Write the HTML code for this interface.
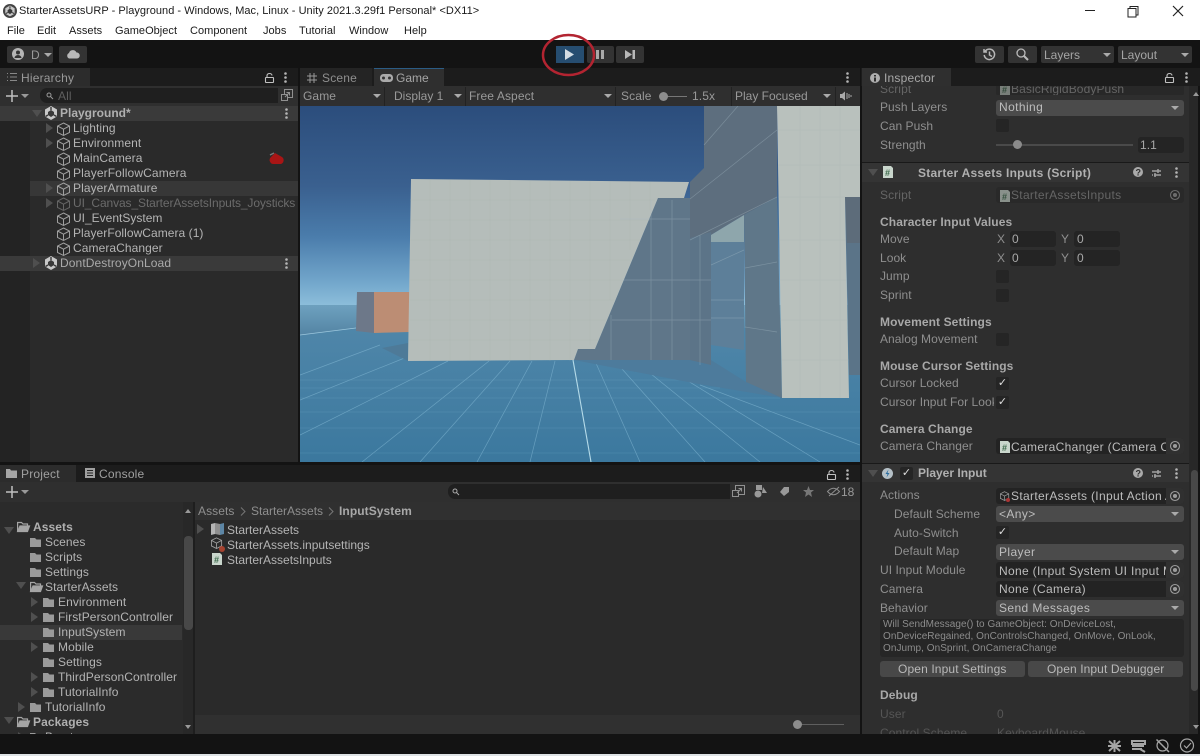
<!DOCTYPE html>
<html><head><meta charset="utf-8">
<style>
html,body{margin:0;padding:0;background:#fff}
body{width:1200px;height:756px;overflow:hidden;position:relative;font-family:"Liberation Sans",sans-serif}
.b{position:absolute}
.t{position:absolute;white-space:nowrap;font-size:12px;line-height:16px;letter-spacing:.08px;color:#b4b4b4}
.w{color:#1a1a1a;font-size:11px;letter-spacing:.03px}
.l{color:#8f8f8f;letter-spacing:.05px}
.h{color:#a8a8a8;font-weight:bold;letter-spacing:.1px}
.d{color:#656565;letter-spacing:.1px}
.v{color:#bdbdbd;letter-spacing:.4px}
.o{color:#bdbdbd;letter-spacing:.33px}
.tab{letter-spacing:.2px}
.tb{letter-spacing:.1px;color:#999}
.dd{position:absolute;left:996px;width:188px;height:16px;background:#4b4b4b;border-radius:3px}
.of{position:absolute;left:996px;width:188px;height:16px;background:#232323;border-radius:3px}
.cb{position:absolute;left:996px;width:13px;height:13px;background:#252525;border-radius:2px;color:#ddd;font-size:11px;line-height:13px;text-align:center}
.nf{position:absolute;height:16px;background:#242424;border-radius:3px}
.btn{position:absolute;background:#333;border-radius:2px}
.tri{position:absolute;width:0;height:0;border-left:4px solid transparent;border-right:4px solid transparent;border-top:4px solid #aaa}
.rt{position:absolute;width:0;height:0;border-top:5px solid transparent;border-bottom:5px solid transparent;border-left:7px solid #4f4f4f}
.dt{position:absolute;width:0;height:0;border-left:5px solid transparent;border-right:5px solid transparent;border-top:7px solid #4f4f4f}
svg{position:absolute;overflow:visible}
</style></head><body>
<svg width="0" height="0" style="position:absolute"><defs>
<g id="cube" fill="none" stroke="#a0a0a0" stroke-width="1"><path d="M6.500 1 12.500 4V10.500L6.500 13.500 .5 10.500V4Z"/><path d="M.5 4 6.500 7.200 12.500 4M6.500 7.200V13.500"/></g>
<g id="folder" fill="#9a9a9a"><path d="M0 2H5L6.500 3.500H11V11H0Z"/></g>
<g id="open" fill="none" stroke="#a5a5a5" stroke-width="1.2"><path d="M.6 10.500V1.500H4.500L6 3H10.500V5"/><path d="M.6 10.500 3 5H12.500L10.500 10.500Z" fill="#a5a5a5"/></g>
<g id="scene"><path d="M7 0 13 3.500V10.500L7 14 1 10.500V3.500Z" fill="#c9c9c9"/><path d="M7 4 10 6V9L7 11 4 9V6Z" fill="#3a3a3a"/><path d="M7 4V1M4 9 1.500 10.500M10 9 12.500 10.500" stroke="#3a3a3a" stroke-width="1.400"/></g>
<g id="target" fill="none" stroke="#9b9b9b" stroke-width="1.1"><circle cx="5" cy="5" r="4.500"/><circle cx="5" cy="5" r="1.500" fill="#9b9b9b"/></g>
<g id="kebab" fill="#b5b5b5"><circle cx="1.500" cy="1.500" r="1.300"/><circle cx="1.500" cy="5.500" r="1.300"/><circle cx="1.500" cy="9.500" r="1.300"/></g>
<g id="lock" fill="none" stroke="#c0c0c0" stroke-width="1.1"><rect x=".5" y="4.500" width="8" height="5" rx=".5"/><path d="M2 4.500V2.500A2.500 2 0 0 1 7 2.500"/></g>
<g id="sliders" stroke="#a0a0a0" stroke-width="1.500"><path d="M0 3H9M2 7H9M0 7H1M6 1V5M3 5V9"/></g>
<g id="script"><path d="M0 0H8L10 2V12H0Z" fill="#c9d6cc"/><text x="2" y="10" font-size="9" font-weight="bold" fill="#3c6a4b" font-family="Liberation Sans">#</text></g>
</defs></svg>

<div class="b" style="left:0;top:0;width:1200px;height:40px;background:#fff"></div>
<div class="b" style="left:0;top:40px;width:1200px;height:714px;background:#131313"></div>
<svg style="left:3px;top:4px" width="14" height="14"><circle cx="7" cy="7" r="7" fill="#444"/><use href="#scene" transform="translate(1.500 1.500) scale(.78)"/></svg>
<span class="t w" style="left:19px;top:3px">StarterAssetsURP - Playground - Windows, Mac, Linux - Unity 2021.3.29f1 Personal* &lt;DX11&gt;</span>
<span class="t w" style="left:7px;top:23px">File</span>
<span class="t w" style="left:37px;top:23px">Edit</span>
<span class="t w" style="left:69px;top:23px">Assets</span>
<span class="t w" style="left:115px;top:23px">GameObject</span>
<span class="t w" style="left:190px;top:23px">Component</span>
<span class="t w" style="left:263px;top:23px">Jobs</span>
<span class="t w" style="left:299px;top:23px">Tutorial</span>
<span class="t w" style="left:349px;top:23px">Window</span>
<span class="t w" style="left:404px;top:23px">Help</span>
<svg style="left:1085px;top:5px" width="110" height="16" fill="none" stroke="#222" stroke-width="1"><path d="M0 5.500H10"/><path d="M43 3.500H51V12H43ZM45 3.500V1.500H53V10H51"/><path d="M88 1 98 11M98 1 88 11" stroke-width="1.200"/></svg>

<div class="btn" style="left:7px;top:46px;width:46px;height:17px"></div>
<svg style="left:12px;top:48px" width="12" height="12"><circle cx="6" cy="6" r="6" fill="#b5b5b5"/><circle cx="6" cy="4.500" r="2" fill="#333"/><path d="M2.500 10A3.500 3 0 0 1 9.500 10Z" fill="#333"/></svg>
<span class="t" style="left:31px;top:47px;color:#999">D</span>
<div class="tri" style="left:44px;top:53px"></div>
<div class="btn" style="left:59px;top:46px;width:28px;height:17px"></div>
<svg style="left:66px;top:49px" width="14" height="10"><path d="M3 9.500A3 3 0 0 1 3 4 4 4 0 0 1 10.500 3.500 3 3 0 0 1 11 9.500Z" fill="#b8b8b8"/></svg>
<div class="b" style="left:556px;top:46px;width:28px;height:17px;background:#264d70"></div>
<svg style="left:565px;top:49px" width="10" height="11"><path d="M0 0 9 5.500 0 11Z" fill="#d4dde4"/></svg>
<div class="btn" style="left:587px;top:46px;width:27px;height:17px"></div>
<div class="b" style="left:596px;top:50px;width:3px;height:9px;background:#a9a9a9"></div>
<div class="b" style="left:601px;top:50px;width:3px;height:9px;background:#a9a9a9"></div>
<div class="btn" style="left:616px;top:46px;width:28px;height:17px"></div>
<svg style="left:625px;top:50px" width="11" height="10"><path d="M0 0 7 4.500 0 9ZM7.500 0H10V9H7.500Z" fill="#b8b8b8"/></svg>

<div class="btn" style="left:975px;top:46px;width:29px;height:17px"></div>
<svg style="left:983px;top:48px" width="13" height="13" fill="none" stroke="#b8b8b8" stroke-width="1.500"><path d="M2 3.500A5.200 5.200 0 1 1 1.200 7M1 1V4H4M6.500 3.500V7L9 8.500"/></svg>
<div class="btn" style="left:1008px;top:46px;width:29px;height:17px"></div>
<svg style="left:1016px;top:48px" width="13" height="13" fill="none" stroke="#b8b8b8" stroke-width="1.300"><circle cx="5" cy="5" r="4"/><path d="M8 8 12 12" stroke-width="2"/></svg>
<div class="btn" style="left:1041px;top:46px;width:73px;height:17px"></div>
<span class="t" style="left:1044px;top:47px;color:#a5a5a5;letter-spacing:0">Layers</span>
<div class="tri" style="left:1103px;top:53px"></div>
<div class="btn" style="left:1118px;top:46px;width:74px;height:17px"></div>
<span class="t" style="left:1121px;top:47px;color:#a5a5a5;letter-spacing:0">Layout</span>
<div class="tri" style="left:1181px;top:53px"></div>

<!-- Hierarchy -->
<div class="b" style="left:0;top:68px;width:298px;height:18px;background:#1c1c1c"></div>
<div class="b" style="left:0;top:68px;width:90px;height:18px;background:#2c2c2c"></div>
<svg style="left:7px;top:73px" width="11" height="9" stroke="#888" stroke-width="1"><path d="M0 .5H1M3 .5H10M0 4H1M3 4H10M0 7.500H1M3 7.500H10"/></svg>
<span class="t tab" style="left:21px;top:70px;color:#999">Hierarchy</span>
<svg style="left:265px;top:73px" width="10" height="10"><use href="#lock"/></svg>
<svg style="left:284px;top:72px" width="3" height="11"><use href="#kebab"/></svg>
<div class="b" style="left:0;top:86px;width:298px;height:20px;background:#2f2f2f"></div>
<svg style="left:6px;top:90px" width="12" height="12" stroke="#c0c0c0" stroke-width="1.500"><path d="M6 0V12M0 6H12"/></svg>
<div class="tri" style="left:21px;top:94px;border-top-color:#999"></div>
<div class="b" style="left:40px;top:88px;width:238px;height:15px;background:#1f1f1f;border-radius:7px 0 0 7px"></div>
<svg style="left:46px;top:92px" width="8" height="8" fill="none" stroke="#999"><circle cx="3" cy="3" r="2"/><path d="M4.500 4.500 7 7"/></svg>
<span class="t" style="left:58px;top:88px;color:#5e5e5e">All</span>
<svg style="left:281px;top:89px" width="12" height="13" fill="none" stroke="#919191"><rect x="3.500" y=".5" width="8" height="8"/><rect x=".5" y="5.500" width="6" height="6" fill="#2f2f2f"/><path d="M4 8 8 4M5.500 3.500H8.500V6.500"/></svg>
<div class="b" style="left:0;top:106px;width:298px;height:356px;background:#2a2a2a"></div>
<div class="b" style="left:0;top:106px;width:30px;height:356px;background:#232323"></div>
<div class="b" style="left:0;top:106px;width:298px;height:15px;background:#3a3a3a"></div>
<div class="dt" style="left:32px;top:110px"></div>
<svg style="left:44px;top:106px" width="14" height="14"><use href="#scene"/></svg>
<span class="t" style="left:60px;top:105px;color:#b0b0b0;font-weight:bold;letter-spacing:0">Playground*</span>
<svg style="left:285px;top:108px" width="3" height="11"><use href="#kebab"/></svg>
<div class="b" style="left:30px;top:181px;width:268px;height:15px;background:#373737"></div>
<div class="b" style="left:0;top:256px;width:298px;height:15px;background:#3a3a3a"></div>

<div class="rt" style="left:46px;top:123px"></div><svg style="left:57px;top:122px" width="14" height="14"><use href="#cube"/></svg><span class="t" style="left:73px;top:120px">Lighting</span>
<div class="rt" style="left:46px;top:138px"></div><svg style="left:57px;top:137px" width="14" height="14"><use href="#cube"/></svg><span class="t" style="left:73px;top:135px">Environment</span>
<svg style="left:57px;top:152px" width="14" height="14"><use href="#cube"/></svg><span class="t" style="left:73px;top:150px">MainCamera</span>
<svg style="left:268px;top:152px" width="15" height="13"><path d="M3 5 7 1 14 5A4 4 0 0 1 13 12H6A4 4 0 0 1 3 5Z" fill="#a81515"/><path d="M2 3 6 1" stroke="#777" stroke-width="1.500"/></svg>
<svg style="left:57px;top:167px" width="14" height="14"><use href="#cube"/></svg><span class="t" style="left:73px;top:165px;letter-spacing:.12px">PlayerFollowCamera</span>
<div class="rt" style="left:46px;top:183px"></div><svg style="left:57px;top:182px" width="14" height="14"><use href="#cube"/></svg><span class="t" style="left:73px;top:180px">PlayerArmature</span>
<div class="rt" style="left:46px;top:198px"></div><svg style="left:57px;top:197px;opacity:.5" width="14" height="14"><use href="#cube"/></svg>
<div class="b" style="left:73px;top:195px;width:225px;height:16px;overflow:hidden"><span class="t" style="left:0;top:0;color:#6b6b6b;letter-spacing:-.1px">UI_Canvas_StarterAssetsInputs_Joysticks</span></div>
<svg style="left:57px;top:212px" width="14" height="14"><use href="#cube"/></svg><span class="t" style="left:73px;top:210px;letter-spacing:0">UI_EventSystem</span>
<svg style="left:57px;top:227px" width="14" height="14"><use href="#cube"/></svg><span class="t" style="left:73px;top:225px;letter-spacing:.05px">PlayerFollowCamera (1)</span>
<svg style="left:57px;top:242px" width="14" height="14"><use href="#cube"/></svg><span class="t" style="left:73px;top:240px">CameraChanger</span>
<div class="rt" style="left:33px;top:258px"></div>
<svg style="left:44px;top:256px" width="14" height="14"><use href="#scene"/></svg>
<span class="t" style="left:60px;top:255px;color:#aaa;letter-spacing:.1px">DontDestroyOnLoad</span>
<svg style="left:285px;top:258px" width="3" height="11"><use href="#kebab"/></svg>

<!-- Game panel -->
<div class="b" style="left:300px;top:68px;width:560px;height:18px;background:#1c1c1c"></div>
<div class="b" style="left:300px;top:68px;width:72px;height:18px;background:#242424"></div>
<div class="b" style="left:374px;top:68px;width:70px;height:18px;background:#2f2f2f;border-top:1px solid #2b5c85;box-sizing:border-box"></div>
<svg style="left:307px;top:73px" width="10" height="10" stroke="#999" stroke-width="1"><path d="M3 0V10M7 0V10M0 3H10M0 7H10"/></svg>
<span class="t tab" style="left:322px;top:70px;color:#8f8f8f">Scene</span>
<svg style="left:380px;top:74px" width="13" height="8"><rect width="13" height="8" rx="3.500" fill="#aaa"/><circle cx="3.500" cy="4" r="1.500" fill="#333"/><circle cx="9.500" cy="4" r="1.500" fill="#333"/></svg>
<span class="t" style="left:396px;top:70px;color:#a5a5a5;letter-spacing:0">Game</span>
<svg style="left:846px;top:72px" width="3" height="11"><use href="#kebab"/></svg>
<div class="b" style="left:300px;top:86px;width:560px;height:20px;background:#2f2f2f"></div>
<span class="t tb" style="left:303px;top:88px">Game</span><div class="tri" style="left:373px;top:94px"></div>
<div class="b" style="left:384px;top:87px;width:1px;height:19px;background:#222"></div>
<span class="t tb" style="left:394px;top:88px;letter-spacing:0">Display 1</span><div class="tri" style="left:454px;top:94px"></div>
<div class="b" style="left:465px;top:87px;width:1px;height:19px;background:#222"></div>
<span class="t tb" style="left:469px;top:88px">Free Aspect</span><div class="tri" style="left:604px;top:94px"></div>
<div class="b" style="left:615px;top:87px;width:1px;height:19px;background:#222"></div>
<span class="t tb" style="left:621px;top:88px">Scale</span>
<div class="b" style="left:665px;top:95.500px;width:22px;height:1px;background:#777"></div>
<div class="b" style="left:659px;top:92px;width:9px;height:9px;border-radius:50%;background:#8d8d8d"></div>
<span class="t tb" style="left:692px;top:88px">1.5x</span>
<div class="b" style="left:731px;top:87px;width:1px;height:19px;background:#222"></div>
<span class="t tb" style="left:735px;top:88px;letter-spacing:0">Play Focused</span><div class="tri" style="left:823px;top:94px"></div>
<div class="b" style="left:835px;top:87px;width:1px;height:19px;background:#222"></div>
<svg style="left:840px;top:91px" width="12" height="10" fill="#aaa"><path d="M0 3H2L5 .5V9.500L2 7H0Z"/><path d="M7 2V8M9 3V7M11 4V6" stroke="#aaa"/></svg>

<svg style="left:0;top:0" width="1200" height="756" viewBox="0 0 1200 756">
<defs>
<linearGradient id="sky" x1="0" y1="106" x2="0" y2="306" gradientUnits="userSpaceOnUse">
<stop offset="0" stop-color="#2b4d7c"/><stop offset=".4" stop-color="#3a608f"/><stop offset=".65" stop-color="#4a7cab"/><stop offset=".88" stop-color="#72a6cb"/><stop offset="1" stop-color="#8dbedb"/></linearGradient>
<linearGradient id="hz" x1="0" y1="305" x2="0" y2="340" gradientUnits="userSpaceOnUse"><stop offset="0" stop-color="#6ea1bf"/><stop offset="1" stop-color="#4f7f9f"/></linearGradient>
<linearGradient id="gr" x1="0" y1="328" x2="0" y2="462" gradientUnits="userSpaceOnUse"><stop offset="0" stop-color="#4f86a9"/><stop offset="1" stop-color="#3b789e"/></linearGradient>
<clipPath id="gc"><rect x="300" y="106" width="560" height="356"/></clipPath>
</defs>
<g clip-path="url(#gc)">
<rect x="300" y="106" width="560" height="200" fill="url(#sky)"/>
<rect x="300" y="305" width="560" height="40" fill="url(#hz)"/>
<path d="M300 335 356 328H860V462H300Z" fill="url(#gr)"/>
<path d="M300 335 356 328" stroke="#9cc7dd" stroke-width=".8"/>
<g stroke="#8fc3dd" stroke-width=".7" opacity=".5" fill="none">
<path d="M532 361 477 462M489 361 362 462M448 361 300 435M407 357 300 400M614 360 705 462M657 362 820 462M700 385 860 445M380 345 300 375M555 361 530 462M510 361 420 462M595 361 640 462M635 361 760 462"/>
<path d="M300 453H860M300 428H860M300 412H860M300 398H780M300 388H720M300 380H680" opacity=".35"/>
</g>
<path d="M573 360 591 462" stroke="#b5dbe9" stroke-width="1.100"/>
<path d="M382 348 408 343V361Z" fill="#4e7a98"/>
<path d="M574 360H711L746 382 782 398 693 383Z" fill="#4d7b9c"/>
<path d="M357 292H374V333L356 331Z" fill="#6d7889"/>
<path d="M374 292H410V332L374 333Z" fill="#bc8d74"/>
<path d="M704 106H777V197L744 215 711 235 690 240V182L704 168Z" fill="#5d6e7e"/>
<path d="M690 238 711 232V365L690 360Z" fill="#5c7488"/>
<path d="M658 198H690V360H574L578 349H595Z" fill="#5f7689"/>
<path d="M711 235 744 215V242H711Z" fill="#8ea6ac"/>
<path d="M711 242H744V350L711 345Z" fill="#5d7f99"/>
<path d="M744 215 777 197 782 398 746 382Z" fill="#5f7789"/>
<path d="M845 197H860V375H849Z" fill="#5b7488"/>
<path d="M845 197H860V243H847Z" fill="#5d6c7a"/>
<path d="M777 106H860V197H845L849 398H782Z" fill="#b9c1bd"/>
<path d="M411 179 689 182 684 198H658L595 349H578L574 360 408 361Z" fill="#b5bdba"/>
<g stroke="#a2aba8" stroke-width=".5" opacity=".35">
<path d="M430 180V361M450 180V361M470 180V361M490 180V361M510 180V361M530 181V361M550 181V361M570 181V361M590 181V345M610 181V300M630 182V250M650 182V210"/>
<path d="M410 200H655M410 220H650M410 240H640M410 260H630M410 280H622M410 300H614M410 320H606M409 340H598"/>
<path d="M800 106V398M820 106V398M840 106V398M778 130H860M778 165H860M778 197H845M779 240H846M779 280H847M780 320H848M781 360H849"/>
</g>
<g stroke="#a7bbc6" stroke-width=".7" opacity=".4" fill="none">
<path d="M690 199 777 130M704 145 738 106M690 240 777 197M711 265 744 250M711 300H744M711 318H744M690 280H711M621 280H690M612 320H711M620 219H690M651 200V360M611 315V360M672 200V360M745 268 777 262M745 327 777 332M700 235V365"/>
</g>
</g>
</svg>

<!-- Inspector -->
<div class="b" style="left:861px;top:68px;width:339px;height:18px;background:#1c1c1c"></div>
<div class="b" style="left:862px;top:68px;width:89px;height:18px;background:#2f2f2f"></div>
<div class="b" style="left:862px;top:86px;width:327px;height:648px;background:#2e2e2e"></div>
<div class="b" style="left:1189px;top:86px;width:9px;height:648px;background:#282828"></div>
<svg style="left:870px;top:73px" width="10" height="10"><circle cx="5" cy="5" r="5" fill="#aeaeae"/><path d="M4 2H6V3.500H4ZM4 4.500H6V8.500H4Z" fill="#2f2f2f"/></svg>
<span class="t" style="left:884px;top:70px;color:#a8a8a8;letter-spacing:.2px">Inspector</span>
<svg style="left:1165px;top:73px" width="10" height="10"><use href="#lock"/></svg>
<svg style="left:1185px;top:72px" width="3" height="11"><use href="#kebab"/></svg>

<div class="b" style="left:862px;top:86px;width:327px;height:9px;overflow:hidden">
<span class="t d" style="left:18px;top:-5px">Script</span>
<div class="of" style="left:134px;top:-6px;background:#282828"></div>
<svg style="left:138px;top:-3px;opacity:.5" width="9" height="11"><use href="#script"/></svg>
<span class="t d" style="left:149px;top:-5px">BasicRigidBodyPush</span>
</div>
<div class="b" style="left:1193px;top:92px;width:0;height:0;border-left:3.500px solid transparent;border-right:3.500px solid transparent;border-bottom:4px solid #999"></div>
<span class="t l" style="left:880px;top:99px">Push Layers</span>
<div class="dd" style="top:100px"></div><span class="t v" style="left:999px;top:99px">Nothing</span><div class="tri" style="left:1171px;top:106px"></div>
<span class="t l" style="left:880px;top:118px">Can Push</span><div class="cb" style="top:119px"></div>
<span class="t l" style="left:880px;top:137px">Strength</span>
<div class="b" style="left:996px;top:144px;width:137px;height:2px;background:#4a4a4a"></div>
<div class="b" style="left:1013px;top:140px;width:9px;height:9px;border-radius:50%;background:#8a8a8a"></div>
<div class="nf" style="left:1138px;top:137px;width:46px"></div><span class="t" style="left:1140px;top:137px;color:#a8a8a8">1.1</span>

<div class="b" style="left:862px;top:162px;width:327px;height:1px;background:#191919"></div>
<div class="b" style="left:862px;top:163px;width:327px;height:19px;background:#343434"></div>
<div class="dt" style="left:868px;top:169px"></div>
<svg style="left:883px;top:166px" width="11" height="13"><use href="#script"/></svg>
<span class="t" style="left:918px;top:165px;font-weight:bold;color:#b0b0b0;letter-spacing:.25px">Starter Assets Inputs (Script)</span>
<svg style="left:1133px;top:167px" width="10" height="10"><circle cx="5" cy="5" r="5" fill="#aaa"/><text x="2.500" y="8.500" font-size="9" font-weight="bold" fill="#2f2f2f" font-family="Liberation Sans">?</text></svg>
<svg style="left:1152px;top:168px" width="10" height="9"><use href="#sliders"/></svg>
<svg style="left:1175px;top:167px" width="3" height="11"><use href="#kebab"/></svg>

<span class="t d" style="left:880px;top:187px">Script</span>
<div class="of" style="top:187px;background:#292929"></div>
<svg style="left:1000px;top:190px;opacity:.6" width="9" height="11"><use href="#script"/></svg>
<span class="t d" style="left:1011px;top:187px;letter-spacing:.3px">StarterAssetsInputs</span>
<svg style="left:1170px;top:190px;opacity:.6" width="10" height="10"><use href="#target"/></svg>

<span class="t h" style="left:880px;top:214px">Character Input Values</span>
<span class="t l" style="left:880px;top:231px">Move</span>
<span class="t l" style="left:997px;top:231px">X</span><div class="nf" style="left:1010px;top:231px;width:46px"></div><span class="t" style="left:1012px;top:231px;color:#a8a8a8">0</span>
<span class="t l" style="left:1061px;top:231px">Y</span><div class="nf" style="left:1074px;top:231px;width:46px"></div><span class="t" style="left:1077px;top:231px;color:#a8a8a8">0</span>
<span class="t l" style="left:880px;top:250px">Look</span>
<span class="t l" style="left:997px;top:250px">X</span><div class="nf" style="left:1010px;top:250px;width:46px"></div><span class="t" style="left:1012px;top:250px;color:#a8a8a8">0</span>
<span class="t l" style="left:1061px;top:250px">Y</span><div class="nf" style="left:1074px;top:250px;width:46px"></div><span class="t" style="left:1077px;top:250px;color:#a8a8a8">0</span>
<span class="t l" style="left:880px;top:268px">Jump</span><div class="cb" style="top:270px"></div>
<span class="t l" style="left:880px;top:287px">Sprint</span><div class="cb" style="top:289px"></div>
<span class="t h" style="left:880px;top:314px">Movement Settings</span>
<span class="t l" style="left:880px;top:331px">Analog Movement</span><div class="cb" style="top:333px"></div>
<span class="t h" style="left:880px;top:358px">Mouse Cursor Settings</span>
<span class="t l" style="left:880px;top:375px">Cursor Locked</span><div class="cb" style="top:377px">✓</div>
<div class="b" style="left:880px;top:394px;width:114px;height:16px;overflow:hidden"><span class="t l" style="left:0;top:0">Cursor Input For Look</span></div><div class="cb" style="top:396px">✓</div>
<span class="t h" style="left:880px;top:421px">Camera Change</span>
<span class="t l" style="left:880px;top:438px">Camera Changer</span>
<div class="of" style="top:438px"></div>
<svg style="left:1000px;top:441px" width="9" height="11"><use href="#script"/></svg>
<div class="b" style="left:1011px;top:439px;width:155px;height:16px;overflow:hidden"><span class="t o" style="left:0;top:0">CameraChanger (Camera Changer)</span></div>
<div class="b" style="left:1166px;top:438px;width:18px;height:16px;background:#303030;border-radius:0 3px 3px 0"></div>
<svg style="left:1170px;top:441px" width="10" height="10"><use href="#target"/></svg>

<div class="b" style="left:862px;top:463px;width:327px;height:1px;background:#191919"></div>
<div class="b" style="left:862px;top:464px;width:327px;height:18px;background:#343434"></div>
<div class="dt" style="left:868px;top:470px"></div>
<svg style="left:882px;top:468px" width="11" height="11"><circle cx="5.500" cy="5.500" r="5.500" fill="#b5c0c7"/><path d="M6.500 1.500 3.500 6H5.500L4.500 9.500 7.500 5H5.500Z" fill="#2b6da0"/></svg>
<div class="cb" style="left:900px;top:467px">✓</div>
<span class="t" style="left:918px;top:465px;font-weight:bold;color:#b0b0b0;letter-spacing:0">Player Input</span>
<svg style="left:1133px;top:468px" width="10" height="10"><circle cx="5" cy="5" r="5" fill="#aaa"/><text x="2.500" y="8.500" font-size="9" font-weight="bold" fill="#2f2f2f" font-family="Liberation Sans">?</text></svg>
<svg style="left:1152px;top:469px" width="10" height="9"><use href="#sliders"/></svg>
<svg style="left:1175px;top:468px" width="3" height="11"><use href="#kebab"/></svg>

<span class="t l" style="left:880px;top:487px">Actions</span>
<div class="of" style="top:488px"></div>
<svg style="left:1000px;top:491px" width="10" height="11"><use href="#cube" transform="scale(.7)"/><circle cx="8" cy="9" r="2" fill="#a33"/></svg>
<div class="b" style="left:1011px;top:488px;width:155px;height:16px;overflow:hidden"><span class="t o" style="left:0;top:0">StarterAssets (Input Action Asset)</span></div>
<div class="b" style="left:1166px;top:488px;width:18px;height:16px;background:#303030;border-radius:0 3px 3px 0"></div>
<svg style="left:1170px;top:491px" width="10" height="10"><use href="#target"/></svg>
<span class="t l" style="left:894px;top:506px">Default Scheme</span>
<div class="dd" style="top:506px"></div><span class="t v" style="left:999px;top:506px">&lt;Any&gt;</span><div class="tri" style="left:1171px;top:512px"></div>
<span class="t l" style="left:894px;top:525px">Auto-Switch</span><div class="cb" style="top:526px">✓</div>
<span class="t l" style="left:894px;top:543px">Default Map</span>
<div class="dd" style="top:544px"></div><span class="t v" style="left:999px;top:544px">Player</span><div class="tri" style="left:1171px;top:550px"></div>
<span class="t l" style="left:880px;top:562px">UI Input Module</span>
<div class="of" style="top:562px"></div>
<div class="b" style="left:999px;top:563px;width:167px;height:16px;overflow:hidden"><span class="t o" style="left:0;top:0">None (Input System UI Input Module)</span></div>
<div class="b" style="left:1166px;top:562px;width:18px;height:16px;background:#303030;border-radius:0 3px 3px 0"></div>
<svg style="left:1170px;top:565px" width="10" height="10"><use href="#target"/></svg>
<span class="t l" style="left:880px;top:581px">Camera</span>
<div class="of" style="top:581px"></div><span class="t o" style="left:999px;top:581px">None (Camera)</span>
<div class="b" style="left:1166px;top:581px;width:18px;height:16px;background:#303030;border-radius:0 3px 3px 0"></div>
<svg style="left:1170px;top:584px" width="10" height="10"><use href="#target"/></svg>
<span class="t l" style="left:880px;top:600px">Behavior</span>
<div class="dd" style="top:600px"></div><span class="t v" style="left:999px;top:600px">Send Messages</span><div class="tri" style="left:1171px;top:606px"></div>
<div class="b" style="left:880px;top:619px;width:304px;height:38px;background:#262626;border-radius:3px"></div>
<span class="t" style="left:883px;top:619px;font-size:10px;letter-spacing:.05px;line-height:12px;color:#8c8c8c">Will SendMessage() to GameObject: OnDeviceLost,</span>
<span class="t" style="left:883px;top:631px;font-size:10px;letter-spacing:.05px;line-height:12px;color:#8c8c8c">OnDeviceRegained, OnControlsChanged, OnMove, OnLook,</span>
<span class="t" style="left:883px;top:643px;font-size:10px;letter-spacing:.05px;line-height:12px;color:#8c8c8c">OnJump, OnSprint, OnCameraChange</span>
<div class="b" style="left:880px;top:661px;width:145px;height:16px;background:#484848;border-radius:3px"></div>
<span class="t" style="left:898px;top:661px;color:#b8b8b8;letter-spacing:.13px">Open Input Settings</span>
<div class="b" style="left:1028px;top:661px;width:155px;height:16px;background:#484848;border-radius:3px"></div>
<span class="t" style="left:1047px;top:661px;color:#b8b8b8;letter-spacing:.1px">Open Input Debugger</span>
<span class="t h" style="left:880px;top:687px">Debug</span>
<span class="t d" style="left:880px;top:706px;color:#555">User</span>
<span class="t d" style="left:997px;top:706px;color:#555">0</span>
<div class="b" style="left:880px;top:725px;width:300px;height:9px;overflow:hidden">
<span class="t" style="left:0;top:0;color:#555">Control Scheme</span>
<span class="t" style="left:117px;top:0;color:#555">KeyboardMouse</span></div>
<div class="b" style="left:1191px;top:470px;width:7px;height:221px;background:#484848;border-radius:4px"></div>
<div class="b" style="left:1193px;top:725px;width:0;height:0;border-left:3.500px solid transparent;border-right:3.500px solid transparent;border-top:4px solid #999"></div>

<!-- Project -->
<div class="b" style="left:0;top:465px;width:860px;height:17px;background:#1c1c1c"></div>
<div class="b" style="left:0;top:465px;width:76px;height:17px;background:#2c2c2c"></div>
<svg style="left:6px;top:468px" width="11" height="11"><path d="M0 1H4L5 2.500H11V10H0Z" fill="#a5a5a5"/></svg>
<span class="t tab" style="left:21px;top:466px;color:#a0a0a0">Project</span>
<svg style="left:85px;top:468px" width="10" height="11" fill="#a0a0a0"><path d="M0 0H10V10H0Z"/><path d="M2 2.500H8M2 5H8M2 7.500H8" stroke="#222"/></svg>
<span class="t tab" style="left:99px;top:466px;color:#a0a0a0">Console</span>
<svg style="left:827px;top:470px" width="10" height="10"><use href="#lock"/></svg>
<svg style="left:846px;top:469px" width="3" height="11"><use href="#kebab"/></svg>
<div class="b" style="left:0;top:482px;width:860px;height:20px;background:#2f2f2f"></div>
<svg style="left:6px;top:486px" width="12" height="12" stroke="#c0c0c0" stroke-width="1.500"><path d="M6 0V12M0 6H12"/></svg>
<div class="tri" style="left:21px;top:490px;border-top-color:#999"></div>
<div class="b" style="left:448px;top:484px;width:282px;height:15px;background:#1f1f1f;border-radius:7px 0 0 7px"></div>
<svg style="left:452px;top:488px" width="8" height="8" fill="none" stroke="#aaa"><circle cx="3" cy="3" r="2"/><path d="M4.500 4.500 7 7"/></svg>
<svg style="left:732px;top:485px" width="13" height="13" fill="none" stroke="#919191"><rect x="3.500" y=".5" width="9" height="9"/><rect x=".5" y="5.500" width="6" height="6" fill="#2f2f2f"/><path d="M5 8 9 4M6.500 3.500H9.500V6.500"/></svg>
<svg style="left:754px;top:485px" width="13" height="13" fill="#999"><rect x="2" y="0" width="6" height="5"/><circle cx="4" cy="9" r="3.500"/><path d="M9 2 13 8H8Z"/></svg>
<svg style="left:779px;top:486px" width="11" height="11"><path d="M5 1H10V6L5 10 1 6Z" fill="#999"/></svg>
<svg style="left:803px;top:486px" width="11" height="11"><path d="M5.500 0 7 4H11L8 6.500 9 11 5.500 8.500 2 11 3 6.500 0 4H4Z" fill="#777"/></svg>
<svg style="left:827px;top:487px" width="13" height="9" fill="none" stroke="#8e8e8e"><path d="M.5 4.500Q6.500-2 12.500 4.500 6.500 11 .5 4.500ZM2 9 12 0"/></svg>
<span class="t" style="left:841px;top:484px;color:#9a9a9a;letter-spacing:0">18</span>

<div class="b" style="left:0;top:502px;width:193px;height:232px;background:#2b2b2b"></div>
<div class="b" style="left:183px;top:502px;width:10px;height:232px;background:#282828"></div>
<div class="b" style="left:193px;top:502px;width:2px;height:232px;background:#1e1e1e"></div>
<div class="b" style="left:195px;top:502px;width:665px;height:232px;background:#2a2a2a"></div>
<div class="b" style="left:195px;top:502px;width:665px;height:18px;background:#303030"></div>
<div class="b" style="left:195px;top:715px;width:665px;height:19px;background:#303030"></div>
<div class="b" style="left:0;top:625px;width:182px;height:15px;background:#393939"></div>
<div class="b" style="left:184px;top:536px;width:9px;height:94px;background:#484848;border-radius:4px"></div>
<div class="b" style="left:185px;top:509px;width:0;height:0;border-left:3.500px solid transparent;border-right:3.500px solid transparent;border-bottom:4px solid #999"></div>
<div class="b" style="left:185px;top:725px;width:0;height:0;border-left:3.500px solid transparent;border-right:3.500px solid transparent;border-top:4px solid #999"></div>

<div class="b" style="left:0;top:502px;width:183px;height:232px;overflow:hidden">
<div class="dt" style="left:4px;top:25px"></div><svg style="left:17px;top:19px" width="13" height="12"><use href="#open"/></svg>
<span class="t" style="left:33px;top:17px;font-weight:bold;color:#b0b0b0">Assets</span>
<svg style="left:30px;top:34px" width="12" height="12"><use href="#folder"/></svg><span class="t" style="left:45px;top:32px">Scenes</span>
<svg style="left:30px;top:49px" width="12" height="12"><use href="#folder"/></svg><span class="t" style="left:45px;top:47px">Scripts</span>
<svg style="left:30px;top:64px" width="12" height="12"><use href="#folder"/></svg><span class="t" style="left:45px;top:62px">Settings</span>
<div class="dt" style="left:16px;top:80px"></div><svg style="left:30px;top:79px" width="13" height="12"><use href="#open"/></svg><span class="t" style="left:45px;top:77px">StarterAssets</span>
<div class="rt" style="left:31px;top:95px"></div><svg style="left:43px;top:94px" width="12" height="12"><use href="#folder"/></svg><span class="t" style="left:58px;top:92px">Environment</span>
<div class="rt" style="left:31px;top:110px"></div><svg style="left:43px;top:109px" width="12" height="12"><use href="#folder"/></svg><span class="t" style="left:58px;top:107px">FirstPersonController</span>
<svg style="left:43px;top:124px" width="12" height="12"><use href="#folder"/></svg><span class="t" style="left:58px;top:122px">InputSystem</span>
<div class="rt" style="left:31px;top:140px"></div><svg style="left:43px;top:139px" width="12" height="12"><use href="#folder"/></svg><span class="t" style="left:58px;top:137px">Mobile</span>
<svg style="left:43px;top:154px" width="12" height="12"><use href="#folder"/></svg><span class="t" style="left:58px;top:152px">Settings</span>
<div class="rt" style="left:31px;top:170px"></div><svg style="left:43px;top:169px" width="12" height="12"><use href="#folder"/></svg><span class="t" style="left:58px;top:167px">ThirdPersonController</span>
<div class="rt" style="left:31px;top:185px"></div><svg style="left:43px;top:184px" width="12" height="12"><use href="#folder"/></svg><span class="t" style="left:58px;top:182px">TutorialInfo</span>
<div class="rt" style="left:18px;top:200px"></div><svg style="left:30px;top:199px" width="12" height="12"><use href="#folder"/></svg><span class="t" style="left:45px;top:197px">TutorialInfo</span>
<div class="dt" style="left:4px;top:215px"></div><svg style="left:17px;top:214px" width="13" height="12"><use href="#open"/></svg>
<span class="t" style="left:33px;top:212px;font-weight:bold;color:#b0b0b0;letter-spacing:.1px">Packages</span>
<div class="rt" style="left:18px;top:230px"></div><svg style="left:30px;top:229px" width="12" height="12"><use href="#folder"/></svg><span class="t" style="left:45px;top:227px">Burst</span>
</div>

<span class="t" style="left:198px;top:503px;color:#8f8f8f">Assets</span>
<svg style="left:240px;top:507px" width="6" height="9" fill="none" stroke="#777"><path d="M1 .5 5 4.500 1 8.500"/></svg>
<span class="t" style="left:251px;top:503px;color:#8f8f8f;letter-spacing:0">StarterAssets</span>
<svg style="left:328px;top:507px" width="6" height="9" fill="none" stroke="#777"><path d="M1 .5 5 4.500 1 8.500"/></svg>
<span class="t" style="left:339px;top:503px;font-weight:bold;color:#a8a8a8">InputSystem</span>
<div class="rt" style="left:197px;top:524px"></div>
<svg style="left:211px;top:523px" width="14" height="12"><path d="M0 1 4 0V11L0 12Z" fill="#b5b5b5"/><path d="M4 0 9 1V12L4 11Z" fill="#8f8f8f"/><path d="M9 1 13 0V11L9 12Z" fill="#5d86a5"/></svg>
<span class="t" style="left:227px;top:522px;letter-spacing:0">StarterAssets</span>
<svg style="left:211px;top:537px" width="15" height="15"><use href="#cube" transform="scale(.85)"/><circle cx="11" cy="12" r="3" fill="#a7432f"/></svg>
<span class="t" style="left:227px;top:537px;letter-spacing:0">StarterAssets.inputsettings</span>
<svg style="left:212px;top:553px" width="11" height="13"><use href="#script"/></svg>
<span class="t" style="left:227px;top:552px;letter-spacing:0">StarterAssetsInputs</span>
<div class="b" style="left:798px;top:724px;width:46px;height:1px;background:#5f5f5f"></div>
<div class="b" style="left:793px;top:720px;width:9px;height:9px;border-radius:50%;background:#8c8c8c"></div>

<!-- Status bar -->
<div class="b" style="left:0;top:734px;width:1200px;height:20px;background:#131313"></div>
<div class="b" style="left:0;top:754px;width:1200px;height:2px;background:#dfe3e6"></div>
<svg style="left:1107px;top:739px" width="90" height="14" fill="none" stroke="#a5a5a5" stroke-width="1.200">
<path d="M2 2 13 12M13 2 2 12M7.500 1V13M1 7H14" stroke-width="2"/>
<path d="M25 2H38V5H25ZM25 7H37M25 10H35M33 10 38 13" stroke-width="2"/>
<circle cx="55.500" cy="6.500" r="5.500"/><path d="M49.500 .5 62 13" stroke-width="1.500"/>
<circle cx="80" cy="6.500" r="6.500"/><path d="M77 6.500 79.500 9 84 4"/>
</svg>

<svg style="left:540px;top:32px" width="60" height="48"><ellipse cx="28.500" cy="23" rx="25.500" ry="20" fill="none" stroke="#b32431" stroke-width="2.500"/></svg>
</body></html>
